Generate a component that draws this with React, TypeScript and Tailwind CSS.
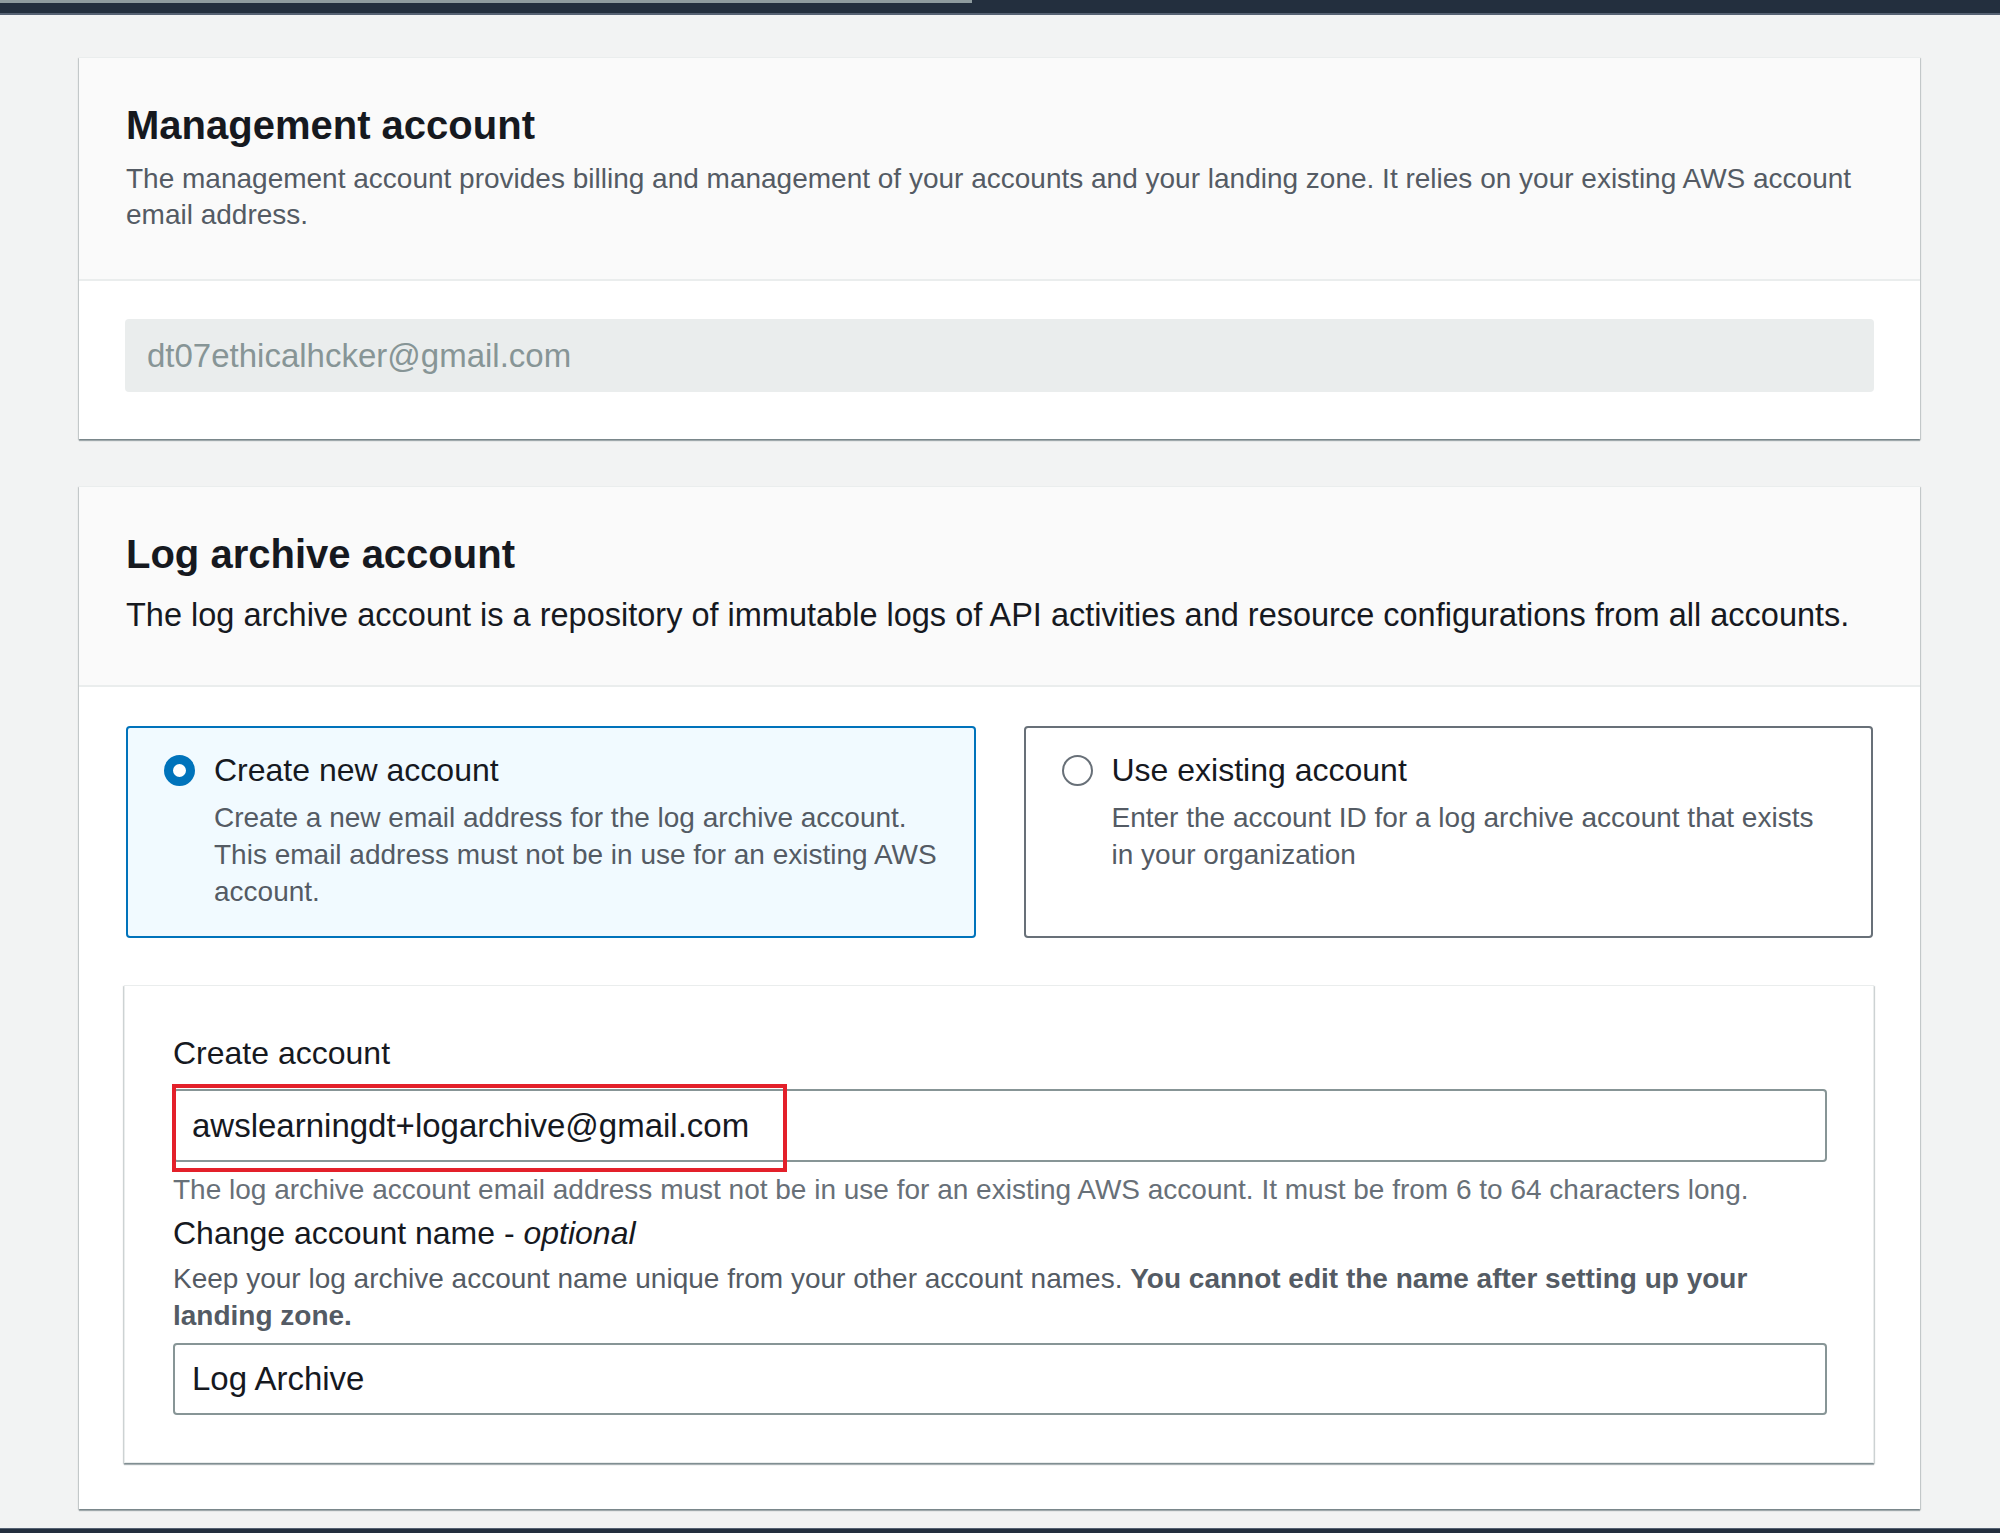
import React from "react";

function Radio({ checked }: { checked: boolean }) {
  return (
    <div className="flex h-[50px] items-center">
      {checked ? (
        <span className="block h-[31px] w-[31px] rounded-full border-[9px] border-[#0073bb] bg-white" />
      ) : (
        <span className="block h-[31px] w-[31px] rounded-full border-2 border-[#687078] bg-white" />
      )}
    </div>
  );
}

function Tile({
  checked,
  title,
  children,
}: {
  checked: boolean;
  title: string;
  children: React.ReactNode;
}) {
  return (
    <div
      className={
        checked
          ? "flex gap-[19px] rounded-[4px] border-2 border-[#0073bb] bg-[#f1faff] pl-[36px] pr-[36px] pt-[17px] pb-[26px]"
          : "flex gap-[19px] rounded-[4px] border-2 border-[#687078] bg-white pl-[36px] pr-[36px] pt-[17px] pb-[26px]"
      }
    >
      <Radio checked={checked} />
      <div>
        <div className="text-[32px] leading-[50px] text-[#16191f]">{title}</div>
        <p className="mt-[4px] text-[28px] leading-[37px] text-[#545b64]">{children}</p>
      </div>
    </div>
  );
}

const cardShadow =
  "shadow-[0_2px_1px_0_rgba(0,28,36,0.3),1px_1px_1px_0_rgba(0,28,36,0.15),-1px_1px_1px_0_rgba(0,28,36,0.15)]";

export default function App() {
  return (
    <div className="flex min-h-[1533px] flex-col bg-[#f2f3f3] font-['Liberation_Sans',Arial,sans-serif]">
      <div className="h-[15px] border-b-2 border-[#566273] bg-[#232f3e]">
        <div className="h-[3px] w-[972px] bg-[#8f9c9f]" />
      </div>

      {/* Management account */}
      <section className={`ml-[79px] mt-[42px] w-[1841px] border-t border-[#eaeded] ${cardShadow}`}>
        <div className="border-b-2 border-[#eaeded] bg-[#fafafa] px-[47px] pt-[42px] pb-[46px]">
          <h2 className="text-[40px] font-bold leading-[50px] text-[#16191f]">Management account</h2>
          <p className="mt-[11px] text-[28px] leading-[36px] text-[#545b64]">
            The management account provides billing and management of your accounts and your landing
            zone. It relies on your existing AWS account email address.
          </p>
        </div>
        <div className="bg-white px-[46px] pt-[38px] pb-[47px]">
          <input
            readOnly
            disabled
            value="dt07ethicalhcker@gmail.com"
            className="block h-[73px] w-full rounded-[4px] bg-[#eaeded] px-[22px] text-[33px] text-[#879596] outline-none"
          />
        </div>
      </section>

      {/* Log archive account */}
      <section className={`ml-[79px] mt-[47px] w-[1841px] border-t border-[#eaeded] ${cardShadow}`}>
        <div className="border-b-2 border-[#eaeded] bg-[#fafafa] px-[47px] pt-[42px] pb-[45px]">
          <h2 className="text-[40px] font-bold leading-[50px] text-[#16191f]">Log archive account</h2>
          <p className="mt-[11px] text-[32.5px] leading-[50px] text-[#16191f]">
            The log archive account is a repository of immutable logs of API activities and resource
            configurations from all accounts.
          </p>
        </div>

        <div className="bg-white px-[47px] pt-[39px] pb-[46px]">
          <div className="grid grid-cols-2 gap-[48px]">
            <Tile checked title="Create new account">
              Create a new email address for the log archive account. This email address must not be
              in use for an existing AWS account.
            </Tile>
            <Tile checked={false} title="Use existing account">
              Enter the account ID for a log archive account that exists in your organization
            </Tile>
          </div>

          <div
            className={`mt-[47px] -ml-[2px] w-[1750px] border border-[#eaeded] bg-white pl-[48px] pr-[46px] pt-[42px] pb-[47px] ${cardShadow}`}
          >
            <label className="block text-[32px] leading-[50px] text-[#16191f]">Create account</label>
            <div className="relative mt-[11px]">
              <input
                readOnly
                value="awslearningdt+logarchive@gmail.com"
                className="block h-[73px] w-full rounded-[4px] border-2 border-[#879596] bg-white px-[17px] text-[33px] text-[#16191f] outline-none"
              />
              <div className="pointer-events-none absolute left-[-1px] top-[-5px] h-[88px] w-[615px] border-4 border-[#e3202a]" />
            </div>
            <p className="mt-[10px] text-[28px] leading-[36px] text-[#687078]">
              The log archive account email address must not be in use for an existing AWS account. It
              must be from 6 to 64 characters long.
            </p>
            <label className="block text-[32px] leading-[50px] text-[#16191f]">
              Change account name - <i>optional</i>
            </label>
            <p className="mt-[2px] text-[28px] leading-[37px] text-[#545b64]">
              Keep your log archive account name unique from your other account names.{" "}
              <b className="font-bold">You cannot edit the name after setting up your landing zone.</b>
            </p>
            <input
              readOnly
              value="Log Archive"
              className="mt-[9px] block h-[72px] w-full rounded-[4px] border-2 border-[#879596] bg-white px-[17px] text-[33px] text-[#16191f] outline-none"
            />
          </div>
        </div>
      </section>

      <div className="mt-auto h-[5px] border-t border-[#566273] bg-[#232f3e]" />
    </div>
  );
}
